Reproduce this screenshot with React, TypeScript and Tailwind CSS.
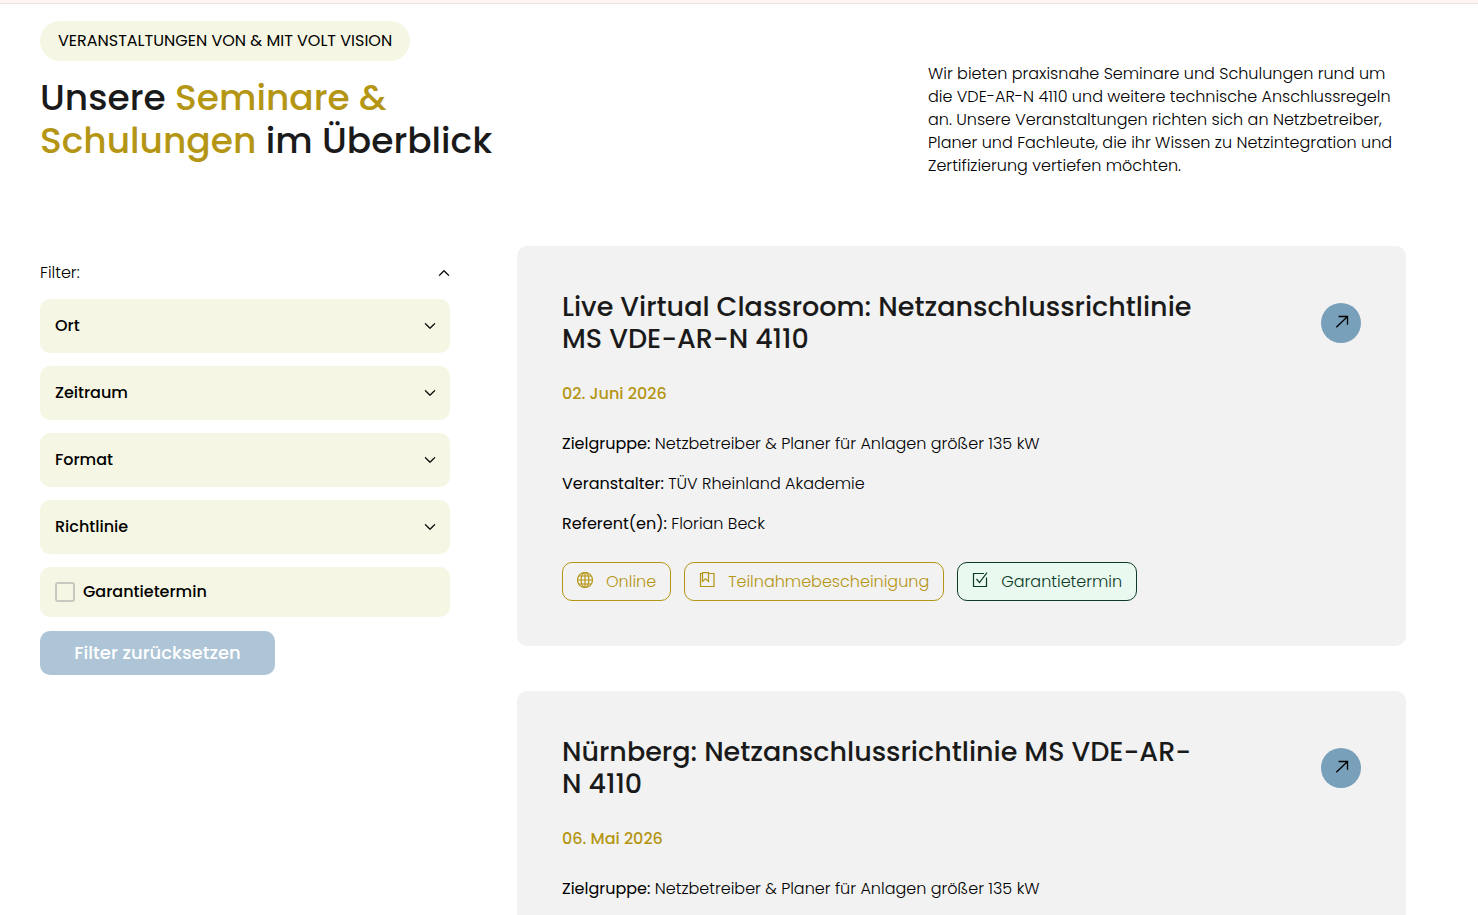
import React, { useState } from "react";
import { BsChevronDown, BsChevronUp } from "react-icons/bs";

const filters = ["Ort", "Zeitraum", "Format", "Richtlinie"];

const events = [
    {
        title: "Live Virtual Classroom: Netzanschlussrichtlinie MS VDE-AR-N 4110",
        date: "02. Juni 2026",
        place: "Online",
    },
    {
        title: "Nürnberg: Netzanschlussrichtlinie MS VDE-AR-N 4110",
        date: "06. Mai 2026",
        place: "Nürnberg",
    },
];

function GlobeIcon() {
    return (
        <svg viewBox="0 0 17 17" className="mb-[2px] h-[17px] w-[17px]" fill="none" stroke="currentColor" strokeWidth="1.2" aria-hidden="true">
            <circle cx="8" cy="8" r="7.5" />
            <ellipse cx="8" cy="8" rx="3.9" ry="7.5" />
            <path d="M8 .5v15M.5 8h15M1.8 4h12.4M1.8 12h12.4" />
        </svg>
    );
}

function CertificateIcon() {
    return (
        <svg viewBox="0 0 17 17" className="mb-[2px] h-[17px] w-[17px]" fill="none" stroke="currentColor" strokeWidth="1.2" aria-hidden="true">
            <path d="M3.5 1.5h-2v13h13.5v-13H9.5" />
            <path d="M3.5 .7h6v8.8l-3-2.6l-3 2.6z" />
        </svg>
    );
}

function CheckIcon() {
    return (
        <svg viewBox="0 0 17 17" className="mb-[2px] h-[17px] w-[17px]" fill="none" stroke="currentColor" strokeWidth="1.2" aria-hidden="true">
            <path d="M12 1.5H1.5v13h13V5.5" />
            <path d="M4.5 7l3 3.6L15 .6" />
        </svg>
    );
}

function ArrowIcon() {
    return (
        <svg viewBox="0 0 16 16" className="h-4 w-4" fill="none" stroke="currentColor" strokeWidth="1.3" aria-hidden="true">
            <path d="M3.3 13.2L14.3 2.7M5.6 2.5h8.9v8.3" />
        </svg>
    );
}

function Tag({ icon, label, green }: { icon: React.ReactNode; label: string; green?: boolean }) {
    return (
        <span className={`flex h-[39px] items-center gap-3 rounded-[10px] border px-[14px] font-light ${green ? "border-[#0d3b26] bg-[#e9f9ef] text-[#0d3b26]" : "border-[#b49614] text-[#b49614]"}`}>
            {icon}
            {label}
        </span>
    );
}

function EventCard({ title, date, place }: { title: string; date: string; place: string }) {
    return (
        <article className="rounded-[10px] bg-[#f2f2f2] p-[45px]">
            <div className="flex items-center justify-between">
                <h2 className="w-4/5 text-[27px] leading-8 font-medium text-[#1a1a1a]">{title}</h2>
                <a href="#" aria-label={title} className="flex h-10 w-10 shrink-0 items-center justify-center rounded-full bg-[#78a0bb] pb-[2px] text-black">
                    <ArrowIcon />
                </a>
            </div>
            <p className="mt-[27px] font-medium text-[#b49614]">{date}</p>
            <div className="mt-[26px] flex flex-col gap-4 font-light">
                <p><strong className="font-normal">Zielgruppe:</strong> Netzbetreiber &amp; Planer für Anlagen größer 135 kW</p>
                <p><strong className="font-normal">Veranstalter:</strong> TÜV Rheinland Akademie</p>
                <p><strong className="font-normal">Referent(en):</strong> Florian Beck</p>
            </div>
            <div className="mt-[26px] flex flex-wrap gap-[13px]">
                <Tag icon={<GlobeIcon />} label={place} />
                <Tag icon={<CertificateIcon />} label="Teilnahmebescheinigung" />
                <Tag icon={<CheckIcon />} label="Garantietermin" green />
            </div>
        </article>
    );
}

function Sidebar() {
    const [open, setOpen] = useState(true);
    const [guaranteed, setGuaranteed] = useState(false);

    return (
        <aside className="w-full shrink-0 pt-[13px] lg:w-[410px]">
            <button type="button" onClick={() => setOpen(!open)} className="flex w-full items-center justify-between pb-3 leading-7 font-light">
                Filter:
                {open ? <BsChevronUp className="h-3 w-3 stroke-1" /> : <BsChevronDown className="h-3 w-3 stroke-1" />}
            </button>
            {open && (
                <form>
                    <div className="flex flex-col gap-[13px]">
                        {filters.map((name) => (
                            <div key={name} className="relative">
                                <select aria-label={name} className="h-[54px] w-full appearance-none rounded-[10px] bg-[#f5f6e3] px-[15px] font-medium">
                                    <option>{name}</option>
                                </select>
                                <BsChevronDown className="pointer-events-none absolute top-[21px] right-[14px] h-3 w-3 stroke-1" />
                            </div>
                        ))}
                        <label className="flex h-[50px] items-center gap-2 rounded-[10px] bg-[#f5f6e3] px-[15px] font-medium">
                            <input
                                type="checkbox"
                                checked={guaranteed}
                                onChange={(e) => setGuaranteed(e.target.checked)}
                                className="h-5 w-5 appearance-none rounded-[3px] border-2 border-[#c8c8c0] checked:bg-[#78a0bb]"
                            />
                            Garantietermin
                        </label>
                    </div>
                    <button type="reset" onClick={() => setGuaranteed(false)} className="mt-[14px] h-11 w-[235px] rounded-[10px] bg-[#adc5d6] text-lg font-medium text-white">
                        Filter zurücksetzen
                    </button>
                </form>
            )}
        </aside>
    );
}

function App() {
    return (
        <div className="min-h-screen bg-white font-[Poppins,Inter,sans-serif] text-base text-black">
            <div className="h-1 border-b border-[#eadfe2] bg-[#fff5f5]" />
            <main className="pt-[17px] pr-[72px] pl-10">
                <header className="flex flex-wrap items-start justify-between">
                    <div className="max-w-[480px]">
                        <p className="inline-flex h-10 items-center rounded-full bg-[#f5f6e3] px-[18px] uppercase">
                            Veranstaltungen von &amp; mit Volt Vision
                        </p>
                        <h1 className="mt-[15px] text-4xl leading-[43px] font-medium text-[#1a1a1a]">
                            Unsere <span className="text-[#b49614]">Seminare &amp; Schulungen</span> im Überblick
                        </h1>
                    </div>
                    <p className="w-[478px] pt-[41px] leading-[23px] font-light">
                        Wir bieten praxisnahe Seminare und Schulungen rund um die VDE-AR-N 4110 und weitere technische Anschlussregeln an. Unsere Veranstaltungen richten sich an Netzbetreiber, Planer und Fachleute, die ihr Wissen zu Netzintegration und Zertifizierung vertiefen möchten.
                    </p>
                </header>
                <div className="mt-[69px] flex flex-col gap-[67px] lg:flex-row">
                    <Sidebar />
                    <section className="flex flex-1 flex-col gap-[45px] pb-[45px]">
                        {events.map((event) => (
                            <EventCard key={event.date} {...event} />
                        ))}
                    </section>
                </div>
            </main>
        </div>
    );
}

export default App;
